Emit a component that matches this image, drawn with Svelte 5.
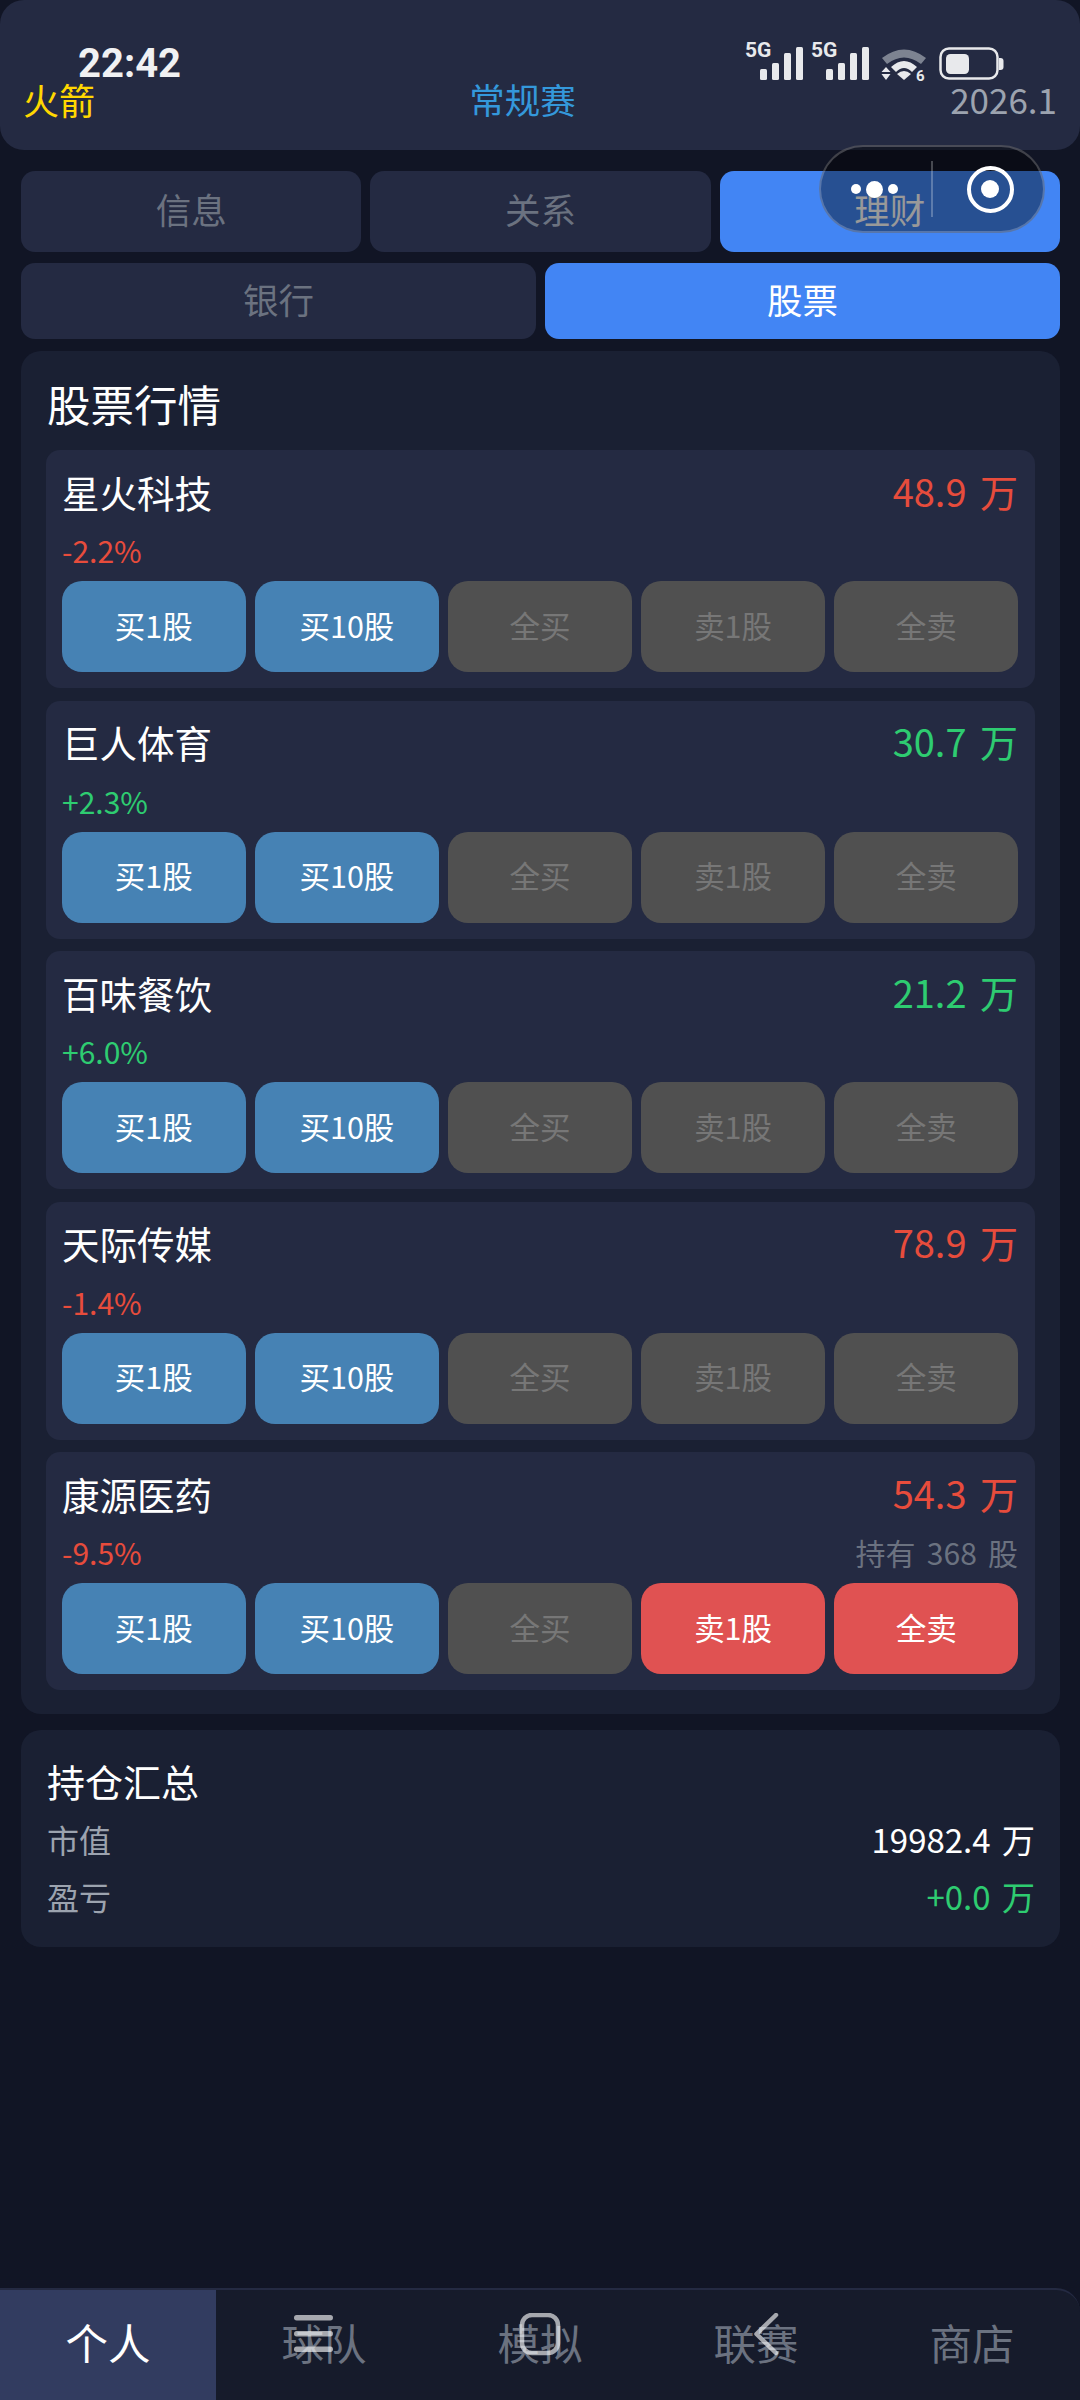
<script>
  const stocks = [
    { name: '星火科技', price: '48.9 万', pct: '-2.2%', up: false, held: '' },
    { name: '巨人体育', price: '30.7 万', pct: '+2.3%', up: true, held: '' },
    { name: '百味餐饮', price: '21.2 万', pct: '+6.0%', up: true, held: '' },
    { name: '天际传媒', price: '78.9 万', pct: '-1.4%', up: false, held: '' },
    { name: '康源医药', price: '54.3 万', pct: '-9.5%', up: false, held: '持有 368 股' }
  ];
  const navs = ['个人', '球队', '模拟', '联赛', '商店'];
</script>

<div class="page">
  <header class="top">
    <span class="team">火箭</span>
    <span class="league">常规赛</span>
    <span class="date">2026.1</span>
  </header>

  <main class="content">
    <div class="tabs three">
      <div class="tab">信息</div>
      <div class="tab">关系</div>
      <div class="tab on">理财</div>
    </div>
    <div class="tabs two">
      <div class="tab">银行</div>
      <div class="tab on">股票</div>
    </div>

    <section class="card market">
      <h2 class="title">股票行情</h2>
      <div class="list">
        {#each stocks as s}
          <article class="stock">
            <div class="row name-row">
              <span class="name">{s.name}</span>
              <span class="price" class:up={s.up} class:down={!s.up}>{s.price}</span>
            </div>
            <div class="row pct-row">
              <span class="pct" class:up={s.up} class:down={!s.up}>{s.pct}</span>
              {#if s.held}<span class="held">{s.held}</span>{/if}
            </div>
            <div class="btns">
              <div class="btn buy">买1股</div>
              <div class="btn buy">买10股</div>
              <div class="btn off">全买</div>
              <div class="btn" class:sell={s.held} class:off={!s.held}>卖1股</div>
              <div class="btn" class:sell={s.held} class:off={!s.held}>全卖</div>
            </div>
          </article>
        {/each}
      </div>
    </section>

    <section class="card summary">
      <h3 class="sum-title">持仓汇总</h3>
      <div class="sum-row"><span class="label">市值</span><span class="value">19982.4 万</span></div>
      <div class="sum-row"><span class="label">盈亏</span><span class="value up">+0.0 万</span></div>
    </section>
  </main>

  <nav class="nav">
    {#each navs as n, i}
      <div class="nav-item" class:active={i === 0}>{n}</div>
    {/each}
  </nav>

  <!-- system status bar overlay -->
  <div class="time">22:42</div>
  <div class="status">
    <div class="sig">
      <span class="fiveg">5G</span>
      <svg width="43" height="33" viewBox="0 0 43 33"><g fill="#e8e9ec"><rect x="0" y="22" width="7" height="11" rx="1.5"/><rect x="12" y="16" width="7" height="17" rx="1.5"/><rect x="24" y="6" width="7" height="27" rx="1.5"/><rect x="36" y="0" width="7" height="33" rx="1.5"/></g></svg>
    </div>
    <div class="sig">
      <span class="fiveg">5G</span>
      <svg width="43" height="33" viewBox="0 0 43 33"><g fill="#e8e9ec"><rect x="0" y="22" width="7" height="11" rx="1.5"/><rect x="12" y="16" width="7" height="17" rx="1.5"/><rect x="24" y="6" width="7" height="27" rx="1.5"/><rect x="36" y="0" width="7" height="33" rx="1.5"/></g></svg>
    </div>
    <svg class="wifi" width="50" height="38" viewBox="0 0 50 38">
      <path d="M2 11 Q24 -6 46 11 L41 17 Q24 4 7 17 Z" fill="#7d8391"/>
      <path d="M11 21 Q24 9 37 21 L32 26 Q24 18 16 26 Z" fill="#e8e9ec" transform="translate(0 -1)"/>
      <path d="M17 27 Q24 21 31 27 L24 33 Z" fill="#e8e9ec"/>
      <path d="M6 20 L10.500 25 H1.500 Z M1.500 27 H10.500 L6 33 Z" fill="#e8e9ec"/>
      <text x="36" y="34" class="six">6</text>
    </svg>
    <svg class="batt" width="65" height="33" viewBox="0 0 65 33">
      <rect x="1.500" y="1.500" width="57" height="30" rx="8.500" fill="none" stroke="#e8e9ec" stroke-width="2.500"/>
      <rect x="7" y="7" width="23" height="20" rx="4.500" fill="#e8e9ec"/>
      <path d="M60 11 h1.500 a3 3 0 0 1 3 3 v6 a3 3 0 0 1 -3 3 h-1.500 Z" fill="#e8e9ec"/>
    </svg>
  </div>

  <!-- mini-program capsule overlay -->
  <div class="capsule">
    <div class="cap-left"><i class="dot"></i><i class="dot big"></i><i class="dot"></i></div>
    <div class="cap-line"></div>
    <div class="cap-right"><i class="ring"></i></div>
  </div>

  <!-- gesture bar overlay -->
  <svg class="gest" width="1080" height="60" viewBox="0 0 1080 60">
    <g fill="rgba(255,255,255,0.62)">
      <rect x="294" y="2" width="39" height="5.500" rx="2.700"/>
      <rect x="294" y="18" width="39" height="5.500" rx="2.700"/>
      <rect x="294" y="33.500" width="39" height="5.500" rx="2.700"/>
    </g>
    <rect x="522" y="2" width="36" height="38" rx="10" fill="none" stroke="rgba(255,255,255,0.62)" stroke-width="4.500"/>
    <path d="M776 2 L756.500 21 L776 40" fill="none" stroke="rgba(255,255,255,0.62)" stroke-width="4.500" stroke-linecap="round" stroke-linejoin="round"/>
  </svg>
</div>

<style>
  :global(body) {
    margin: 0;
    background: #111525;
  }
  .page {
    position: relative;
    width: 1080px;
    height: 2400px;
    overflow: hidden;
    background: #111525;
    font-family: "Noto Sans CJK SC", "Noto Sans", sans-serif;
    color: #fff;
    display: flex;
    flex-direction: column;
  }
  .top {
    height: 150px;
    box-sizing: border-box;
    padding: 74px 23px 26px;
    background: #242a42;
    border-radius: 24px;
    display: flex;
    justify-content: space-between;
    align-items: center;
    flex: none;
  }
  .team { color: #ffd700; font-size: 36px; line-height: 50px; }
  .league { color: #3498db; font-size: 35.500px; line-height: 50px; }
  .date { color: #9ca3af; font-size: 35px; line-height: 50px; text-align: right; }

  .content {
    padding: 21px 20px 0 21px;
    flex: 1;
    min-height: 0;
  }
  .tabs { display: grid; gap: 9px; }
  .three { grid-template-columns: repeat(3, 1fr); height: 81px; margin-bottom: 11px; }
  .two { grid-template-columns: repeat(2, 1fr); height: 76px; margin-bottom: 12px; }
  .tab {
    background: #242a42;
    color: #6b7280;
    border-radius: 14px;
    font-size: 35.500px;
    padding-bottom: 6px;
    box-sizing: border-box;
    display: flex;
    align-items: center;
    justify-content: center;
  }
  .tab.on { background: #4285f4; color: #fff; }

  .card {
    background: #1a2033;
    border-radius: 20px;
    padding: 24px 25px;
  }
  .title {
    margin: 0 0 12px;
    font-size: 43.500px;
    line-height: 57px;
    padding-bottom: 6px;
    padding-left: 1px;
    font-weight: 400;
  }
  .list { display: flex; flex-direction: column; gap: 12.600px; }
  .stock {
    background: #242a42;
    border-radius: 14px;
    padding: 16px 17px 16px 16px;
  }
  .row { display: flex; justify-content: space-between; align-items: center; }
  .name-row { height: 54px; margin-bottom: 12px; padding-bottom: 4px; box-sizing: border-box; }
  .pct-row { height: 42px; margin-bottom: 7px; padding-bottom: 6px; box-sizing: border-box; }
  .name { font-size: 37.500px; }
  .price { font-size: 38px; word-spacing: 5px; position: relative; top: -1px; }
  .pct { font-size: 30px; }
  .held { font-size: 30px; color: #6b7280; word-spacing: 4.500px; }
  .up { color: #2ecc71; }
  .down { color: #e74c3c; }
  .btns { display: grid; grid-template-columns: repeat(5, 1fr); gap: 9.500px; }
  .btn {
    height: 91px;
    border-radius: 20px;
    font-size: 30.500px;
    padding-bottom: 4px;
    box-sizing: border-box;
    display: flex;
    align-items: center;
    justify-content: center;
  }
  .buy { background: #4682b4; color: #fff; }
  .off { background: #505050; color: #777777; }
  .sell { background: #e05252; color: #fff; }

  .summary { margin-top: 16px; padding-bottom: 27.500px; }
  .sum-title {
    margin: 0 0 6.500px;
    font-size: 38px;
    line-height: 54px;
    padding-left: 1px;
    font-weight: 400;
  }
  .sum-row {
    display: flex;
    justify-content: space-between;
    align-items: center;
    height: 48px;
    margin-bottom: 9px;
    font-size: 32px;
  }
  .sum-row:last-child { margin-bottom: 0; }
  .label { color: #9ca3af; padding-left: 1px; }
  .value { font-size: 33px; word-spacing: 4px; }

  .nav {
    flex: none;
    height: 112px;
    box-sizing: border-box;
    display: grid;
    grid-template-columns: repeat(5, 216px);
    background: #161b2b;
    border-top: 2px solid #242a42;
    border-top-right-radius: 24px;
    overflow: hidden;
  }
  .nav-item {
    color: #6b7280;
    font-size: 42.500px;
    display: flex;
    align-items: center;
    justify-content: center;
    padding-bottom: 8px;
  }
  .nav-item.active { background: #323c60; color: #fff; }

  .time {
    position: absolute;
    left: 78px;
    top: 39px;
    font-family: Roboto, sans-serif;
    font-weight: 700;
    font-size: 40px;
    line-height: 50px;
    color: #f0f1f3;
  }
  .status {
    position: absolute;
    left: 745px;
    top: 42px;
    display: flex;
    align-items: flex-start;
  }
  .sig { position: relative; width: 66px; height: 38px; }
  .sig svg { position: absolute; left: 15px; top: 5px; }
  .fiveg {
    position: absolute;
    left: 0;
    top: -4px;
    font-family: Roboto, sans-serif;
    font-weight: 700;
    font-size: 21px;
    line-height: 24px;
    color: #e8e9ec;
  }
  .wifi { margin: 5px 0 0 3px; }
  .six { font-family: Roboto, sans-serif; font-weight: 700; font-size: 15px; fill: #e8e9ec; }
  .batt { margin: 5px 0 0 9px; }

  .capsule {
    position: absolute;
    left: 819px;
    top: 145px;
    width: 226px;
    height: 88px;
    box-sizing: border-box;
    border-radius: 44px;
    background: rgba(0, 0, 0, 0.4);
    border: 2px solid rgba(255, 255, 255, 0.22);
    display: flex;
    align-items: center;
  }
  .cap-left { width: 106px; padding-right: 4px; display: flex; justify-content: center; align-items: center; gap: 5px; }
  .dot { width: 10px; height: 10px; border-radius: 50%; background: #fff; }
  .dot.big { width: 17px; height: 17px; }
  .cap-line { width: 2px; height: 56px; background: rgba(255, 255, 255, 0.25); }
  .cap-right { flex: 1; display: flex; justify-content: center; padding-left: 4px; }
  .ring {
    width: 47px;
    height: 47px;
    box-sizing: border-box;
    border-radius: 50%;
    border: 4.500px solid #fff;
    display: flex;
    align-items: center;
    justify-content: center;
  }
  .ring::after {
    content: "";
    width: 18px;
    height: 18px;
    border-radius: 50%;
    background: #fff;
  }
  .gest { position: absolute; left: 0; top: 2313px; pointer-events: none; }
</style>
